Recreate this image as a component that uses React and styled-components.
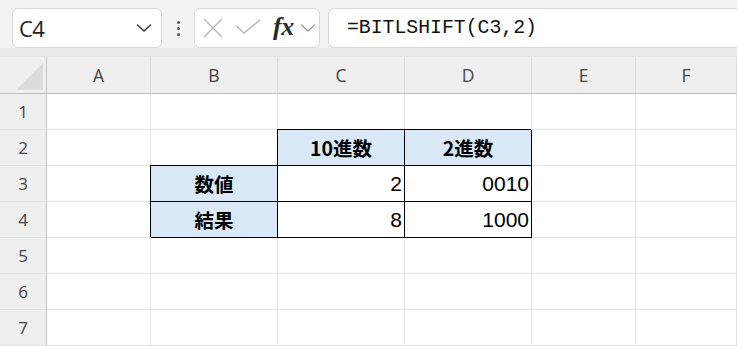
import React from "react";
import styled, {createGlobalStyle} from "styled-components";

const GlobalStyle = createGlobalStyle`
	html, body {
		margin: 0;
		padding: 0;
		background: #ffffff;
		overflow: hidden;
	}
	body {
		font-family: "Open Sans", "Noto Sans", sans-serif;
	}
`

const COLS = ["A", "B", "C", "D", "E", "F"];
const ROWS = [1, 2, 3, 4, 5, 6, 7];

// cell contents keyed by "col+row"
const CELLS = {
	C2: {text: "10進数", head: true},
	D2: {text: "2進数", head: true},
	B3: {text: "数値", head: true},
	C3: {text: "2"},
	D3: {text: "0010"},
	B4: {text: "結果", head: true},
	C4: {text: "8"},
	D4: {text: "1000"},
};

const Chevron = ({size = 16, color = "#333", width = 1.4}) => (
	<svg width={size} height={size} viewBox="0 0 16 16">
		<path d="M1.5 5 L8 11 L14.5 5" fill="none" stroke={color} strokeWidth={width} strokeLinecap="round" strokeLinejoin="round"/>
	</svg>
);

const App = () => {
	return (
		<Page>
			<GlobalStyle/>
			<Toolbar>
				<NameBox>
					<NameText>C4</NameText>
					<Chevron size={16} color="#333" width={1.5}/>
				</NameBox>
				<Dots>
					<span/><span/><span/>
				</Dots>
				<FxBox>
					<Slot $ml={0}>
						<svg width="20" height="20" viewBox="0 0 20 20">
							<path d="M1 1 L19 19 M19 1 L1 19" stroke="#b5b5b5" strokeWidth="1.4" fill="none"/>
						</svg>
					</Slot>
					<Slot $ml={13}>
						<svg width="25" height="20" viewBox="0 0 25 20">
							<path d="M0.5 8 L8 15 L24 2" stroke="#b5b5b5" strokeWidth="1.4" fill="none"/>
						</svg>
					</Slot>
					<FxLabel>fx</FxLabel>
					<Slot $ml={6}>
						<Chevron size={16} color="#9a9a9a" width={1.2}/>
					</Slot>
				</FxBox>
				<FormulaBar>=BITLSHIFT(C3,2)</FormulaBar>
			</Toolbar>
			<Sheet>
				<Corner>
					<svg width="29" height="29" viewBox="0 0 29 29">
						<path d="M28 1 L28 28 L1 28 Z" fill="#dcdcdc"/>
					</svg>
				</Corner>
				{COLS.map((c) => <ColHead key={c}>{c}</ColHead>)}
				{ROWS.map((r) => (
					<React.Fragment key={r}>
						<RowHead>{r}</RowHead>
						{COLS.map((c) => {
							const cell = CELLS[c + r];
							return (
								<Cell key={c} $boxed={!!cell} $fill={cell?.head} $head={cell?.head}>
									{cell?.text}
								</Cell>
							);
						})}
					</React.Fragment>
				))}
			</Sheet>
		</Page>
	);
};

const Page = styled.div`
	width: 737px;
	height: 346px;
	overflow: hidden;
	display: flex;
	flex-direction: column;
`

const Toolbar = styled.div`
	height: 58px;
	box-sizing: border-box;
	display: flex;
	align-items: flex-start;
	padding: 8px 0 0 12px;
	border-bottom: 1px solid #e6e6e6;
	background: linear-gradient(#f3f3f3 0, #f3f3f3 48px, #ebebeb 48px);
`

const Box = styled.div`
	height: 40px;
	box-sizing: border-box;
	background: #ffffff;
	border: 1px solid #d8d8d8;
	border-radius: 6px;
	display: flex;
	align-items: center;
`

const NameBox = styled(Box)`
	width: 150px;
	padding: 0 9px 0 6px;
	justify-content: space-between;
`

const NameText = styled.span`
	font-family: "Open Sans", sans-serif;
	font-size: 22px;
	color: #1f1f1f;
	letter-spacing: -0.5px;
`

const Dots = styled.div`
	width: 32px;
	height: 40px;
	display: flex;
	flex-direction: column;
	align-items: center;
	justify-content: center;
	gap: 3px;
	span {
		width: 3px;
		height: 3px;
		border-radius: 50%;
		background: #555;
	}
`

const FxBox = styled(Box)`
	width: 126px;
	padding: 0 0 0 8px;
`

const Slot = styled.span`
	display: flex;
	align-items: center;
	margin-left: ${(p) => p.$ml}px;
`

const FxLabel = styled.span`
	font-family: "Liberation Serif", "DejaVu Serif", serif;
	font-style: italic;
	font-weight: 700;
	font-size: 26px;
	color: #2a2a2a;
	margin-left: 12px;
	margin-top: -3px;
	letter-spacing: -0.5px;
`

const FormulaBar = styled(Box)`
	flex: 1;
	margin-left: 8px;
	border-right: none;
	border-radius: 6px 0 0 6px;
	padding-left: 18px;
	font-family: "Liberation Mono", "DejaVu Sans Mono", monospace;
	font-size: 19.8px;
	color: #111;
`

const Sheet = styled.div`
	display: grid;
	grid-template-columns: 47px 104px 127px 127px 127px 104px 1fr;
	grid-template-rows: 37px repeat(7, 36px);
	background: #ffffff;
`

const Corner = styled.div`
	background: #efefef;
	border-right: 1px solid #c4c4c4;
	border-bottom: 1px solid #bdbdbd;
	display: flex;
	align-items: flex-end;
	justify-content: flex-end;
	padding: 0 2px 2px 0;
`

const ColHead = styled.div`
	background: #efefef;
	border-right: 1px solid #dadada;
	border-bottom: 1px solid #bdbdbd;
	display: flex;
	align-items: center;
	justify-content: center;
	font-size: 17.5px;
	color: #444;
	&:last-of-type { border-right: none; }
`

const RowHead = styled.div`
	background: #efefef;
	border-right: 1px solid #c4c4c4;
	border-bottom: 1px solid #e0e0e0;
	display: flex;
	align-items: center;
	justify-content: center;
	font-size: 17px;
	color: #444;
`

const Cell = styled.div`
	border-right: 1px solid ${(p) => (p.$boxed ? "#000" : "#e1e1e1")};
	border-bottom: 1px solid ${(p) => (p.$boxed ? "#000" : "#e1e1e1")};
	box-shadow: ${(p) => (p.$boxed ? "-1px -1px 0 0 #000" : "none")};
	background: ${(p) => (p.$fill ? "#dae9f8" : "#ffffff")};
	display: flex;
	align-items: center;
	justify-content: ${(p) => (p.$head ? "center" : "flex-end")};
	padding: ${(p) => (p.$head ? "0" : "0 2px 0 0")};
	font-family: ${(p) => (p.$head ? '"Noto Sans CJK JP", sans-serif' : '"Liberation Sans", "Noto Sans CJK JP", sans-serif')};
	font-weight: ${(p) => (p.$head ? 700 : 400)};
	font-size: ${(p) => (p.$head ? "19.5px" : "21px")};
	color: #000;
	white-space: nowrap;
`

export default App;
